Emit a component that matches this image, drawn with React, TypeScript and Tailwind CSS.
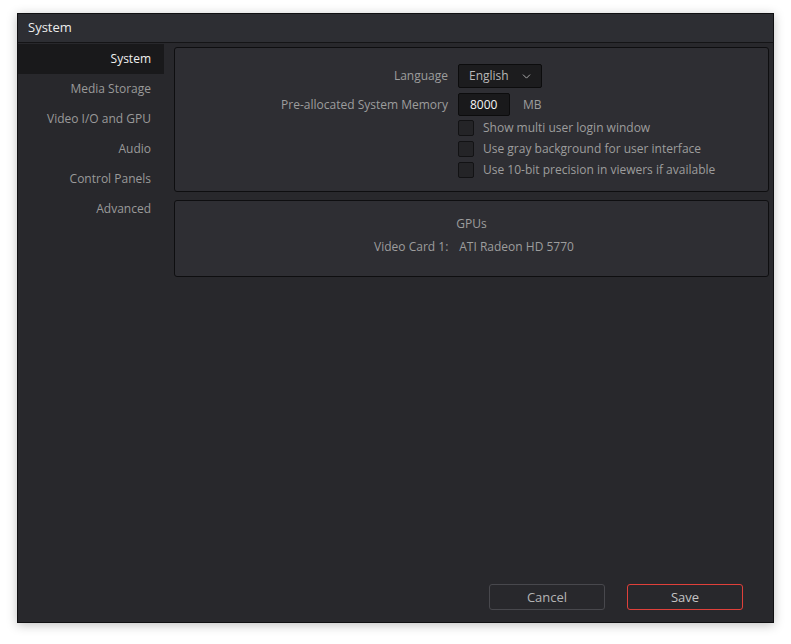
import { ChevronDown } from "lucide-react";

const navItems = ["System", "Media Storage", "Video I/O and GPU", "Audio", "Control Panels", "Advanced"];

const checks = [
  "Show multi user login window",
  "Use gray background for user interface",
  "Use 10-bit precision in viewers if available",
];

function Checkbox() {
  return <span className="block w-[16px] h-[16px] rounded-[2px] bg-[#242427] border border-[#121214]" />;
}

export default function App() {
  return (
    <div
      className="w-[791px] h-[644px] bg-white pt-[13px] pl-[17px]"
      style={{ fontFamily: '"Open Sans", "Noto Sans", sans-serif' }}
    >
      <div className="w-[757px] h-[610px] flex flex-col bg-[#28282c] border border-[#101012] shadow-[0_2px_10px_rgba(0,0,0,0.25)]">
        {/* title bar */}
        <div className="h-[29px] shrink-0 flex items-center px-[10px] bg-[#2d2e33] border-b border-[#141416] text-[13px] text-[#ececec]">
          System
        </div>

        <div className="flex flex-1 min-h-0">
          {/* sidebar */}
          <div className="w-[146px] shrink-0 flex flex-col pt-[1px]">
            {navItems.map((item, i) => (
              <div
                key={item}
                className={`h-[30px] flex items-center justify-end pr-[13px] text-[12px] ${
                  i === 0 ? "bg-[#19191b] text-[#f0f0f0]" : "text-[#9a9a9a]"
                }`}
              >
                {item}
              </div>
            ))}
          </div>

          {/* content */}
          <div className="flex-1 flex flex-col pl-[10px] pr-[4px] pt-[4px] pb-[12px]">
            <div className="h-[145px] rounded-[3px] border border-[#0e0e10] bg-[#2e2e33] pt-[16px]">
              <div className="grid grid-cols-[273px_1fr] gap-x-[10px] text-[12px] text-[#9d9d9d]">
                <div className="h-[24px] flex items-center justify-end">Language</div>
                <div>
                  <div className="w-[84px] h-[24px] rounded-[2px] bg-[#1c1c1e] border border-[#0c0c0d] flex items-center pl-[10px] gap-[11px] text-[#b8b8b8]">
                    English
                    <ChevronDown className="w-[13px] h-[13px] text-[#b0b0b0]" strokeWidth={1.75} />
                  </div>
                </div>

                <div className="h-[23px] mt-[5px] flex items-center justify-end">Pre-allocated System Memory</div>
                <div className="mt-[5px] flex items-center gap-[13px]">
                  <div className="w-[52px] h-[23px] rounded-[2px] bg-[#19191b] border border-[#0c0c0d] flex items-center pl-[11px] text-[#f4f4f4]">
                    8000
                  </div>
                  <span>MB</span>
                </div>

                <div />
                <div className="flex flex-col mt-[1px]">
                  {checks.map((c) => (
                    <div key={c} className="h-[21px] flex items-center gap-[9px]">
                      <Checkbox />
                      <span>{c}</span>
                    </div>
                  ))}
                </div>
              </div>
            </div>

            <div className="mt-[8px] h-[77px] rounded-[3px] border border-[#0e0e10] bg-[#2e2e33] flex flex-col items-center pt-[13px] text-[12px] text-[#9d9d9d]">
              <div className="h-[20px] flex items-center">GPUs</div>
              <div className="h-[20px] mt-[3px] flex items-center gap-[11px] pl-[5px]">
                <span>Video Card 1:</span>
                <span>ATI Radeon HD 5770</span>
              </div>
            </div>

            <div className="flex-1" />

            <div className="flex justify-end gap-[22px] pr-[26px]">
              <button className="w-[116px] h-[26px] rounded-[3px] border border-[#48484d] bg-[#28282c] text-[13px] text-[#b4b4b4] pt-[1px]">
                Cancel
              </button>
              <button className="w-[116px] h-[26px] rounded-[3px] border border-[#e0403a] bg-[#28282c] text-[13px] text-[#c4c4c4] pt-[1px]">
                Save
              </button>
            </div>
          </div>
        </div>
      </div>
    </div>
  );
}
